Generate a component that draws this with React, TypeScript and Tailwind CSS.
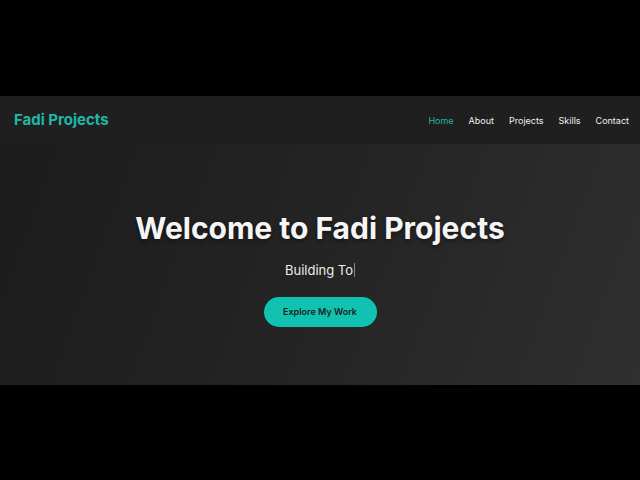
import React from 'react';

const navLinks = ['Home', 'About', 'Projects', 'Skills', 'Contact'];

export default function App() {
  return (
    <div
      className="flex h-screen w-full flex-col justify-center bg-black"
      style={{ fontFamily: 'Inter, "Open Sans", sans-serif' }}
    >
      <nav className="flex h-[48px] items-center justify-between bg-[#1f1f1f] pl-[14px] pr-[11px] pt-[2px] shadow-[0_2px_6px_rgba(0,0,0,0.35)]">
        <span className="text-[15px] font-bold text-[#1fb8a6]">Fadi Projects</span>
        <ul className="flex items-center gap-[15px] text-[9px]">
          {navLinks.map((link, i) => (
            <li key={link} className={i === 0 ? 'text-[#1fb8a6]' : 'text-[#f0f0f0]'}>
              {link}
            </li>
          ))}
        </ul>
      </nav>

      <section className="flex h-[241px] flex-col items-center bg-[linear-gradient(110deg,#1c1c1c_0%,#242424_50%,#2f2f2f_100%)] pt-[64px]">
        <h1 className="text-[30px] font-bold leading-[40px] text-[#f5f5f5] [text-shadow:0_2px_4px_rgba(0,0,0,0.45)]">
          Welcome to Fadi Projects
        </h1>
        <p className="mt-[13px] flex items-center text-[13px] leading-[18px] text-[#eeeeee]">
          Building To
          <span className="ml-[1px] inline-block h-[14px] w-[1px] bg-[#888]" />
        </p>
        <button className="mt-[18px] h-[30px] w-[113px] rounded-full bg-[#12c2b0] text-[9px] font-semibold text-[#1c1c1c]">
          Explore My Work
        </button>
      </section>
    </div>
  );
}
